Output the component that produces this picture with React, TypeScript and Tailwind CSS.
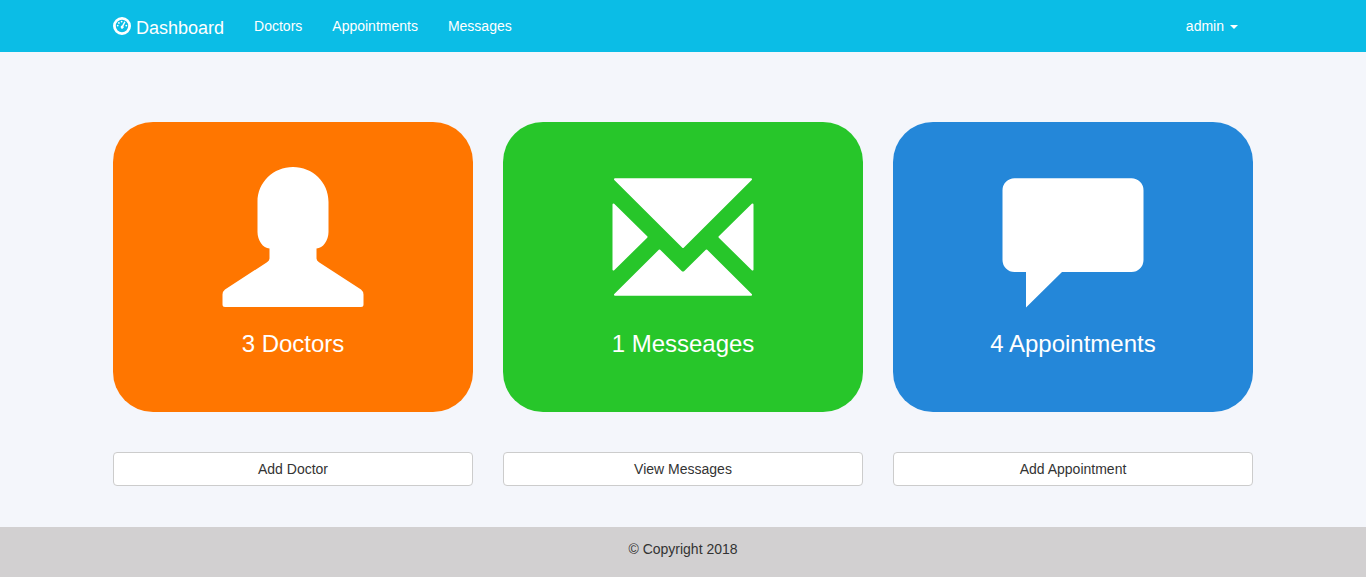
import type { ReactNode } from "react";

function DashboardIcon() {
  return (
    <svg viewBox="0 0 18 18" className="mr-[5px] size-[18px]" aria-hidden="true">
      <circle cx="9" cy="9" r="7.6" fill="none" stroke="#fff" strokeWidth="2.8" />
      <g fill="#fff">
        <circle cx="4.7" cy="8.6" r="0.9" />
        <circle cx="5.9" cy="5.9" r="0.9" />
        <circle cx="8.6" cy="4.6" r="0.9" />
        <circle cx="13.3" cy="8.6" r="0.9" />
        <path d="M11.300 4.400l1.200.6-2.100 4.200a1.500 1.500 0 1 1-1.300-.6z" />
      </g>
    </svg>
  );
}

function UserIcon() {
  return (
    <path
      fill="#fff"
      d="M71 1C90.500 1 106.500 16 106.500 36V66C106.500 74 101 82.500 94.500 82.500V92.500Q94.500 94.500 97 96.200L139 123.500Q141.500 125.500 141.500 128.500V138.500Q141.500 141 139 141H3Q.5 141 .5 138.500V128.500Q.5 125.500 3 123.500L45 96.200Q47.500 94.500 47.500 92.500V82.500C41 82.500 35.500 74 35.500 66V36C35.500 16 51.500 1 71 1Z"
    />
  );
}

function EnvelopeIcon() {
  return (
    <g fill="#fff" stroke="#fff" strokeWidth="2" strokeLinejoin="round">
      <path d="M3 13.300H139L71 81Z" />
      <path d="M1.500 38.500L34.500 71L1.500 103.500Z" />
      <path d="M140.500 38.500L107.500 71L140.500 103.500Z" />
      <path d="M3 128.700L47.500 84.500L69.500 106.200Q71 107.200 72.500 106.200L94.500 84.500L139 128.700Z" />
    </g>
  );
}

function CommentIcon() {
  return (
    <path
      fill="#fff"
      d="M12.500 12.300H129.500A12 12 0 0 1 141.500 24.300V94A12 12 0 0 1 129.500 106H60L24 141.500V106H12.500A12 12 0 0 1 .5 94V24.300A12 12 0 0 1 12.500 12.300Z"
    />
  );
}

type Tile = { label: string; action: string; color: string; icon: ReactNode };

const tiles: Tile[] = [
  { label: "3 Doctors", action: "Add Doctor", color: "bg-[#ff7600]", icon: <UserIcon /> },
  { label: "1 Messeages", action: "View Messages", color: "bg-[#27c62a]", icon: <EnvelopeIcon /> },
  { label: "4 Appointments", action: "Add Appointment", color: "bg-[#2487d9]", icon: <CommentIcon /> },
];

export default function App() {
  return (
    <div className="flex min-h-screen flex-col bg-[#f4f6fb] font-['Liberation_Sans',Arial,sans-serif] text-sm leading-5 text-[#333]">
      <header className="bg-[#0bbde6] text-white">
        <nav className="mx-auto flex h-[52px] max-w-[1170px] items-center px-[15px]">
          <a href="#dashboard" className="mr-[30px] flex items-center text-lg leading-5">
            <DashboardIcon />
            <span className="pt-1">Dashboard</span>
          </a>
          <div className="flex gap-[30px]">
            <a href="#doctors">Doctors</a>
            <a href="#appointments">Appointments</a>
            <a href="#messages">Messages</a>
          </div>
          <button type="button" className="mr-[15px] ml-auto flex items-center gap-1.5" aria-haspopup="menu">
            admin
            <svg viewBox="0 0 8 4" className="mt-0.5 h-1 w-2" aria-hidden="true">
              <path d="M0 0h8L4 4z" fill="#fff" />
            </svg>
          </button>
        </nav>
      </header>
      <main className="mx-auto grid w-full max-w-[1170px] grow grid-cols-1 content-start gap-[30px] px-[15px] pt-[70px] pb-10 md:grid-cols-3">
        {tiles.map((tile) => (
          <section key={tile.label} className="flex flex-col gap-10">
            <div className={`flex h-[290px] flex-col items-center rounded-[40px] pt-11 text-white ${tile.color}`}>
              <svg viewBox="0 0 142 142" className="size-[142px]" aria-hidden="true">
                {tile.icon}
              </svg>
              <h2 className="mt-[22px] text-2xl leading-7">{tile.label}</h2>
            </div>
            <button
              type="button"
              className="h-[34px] w-full rounded border border-[#ccc] bg-white px-3"
            >
              {tile.action}
            </button>
          </section>
        ))}
      </main>
      <footer className="h-[50px] bg-[#d2d0d1] pt-3 text-center">© Copyright 2018</footer>
    </div>
  );
}
